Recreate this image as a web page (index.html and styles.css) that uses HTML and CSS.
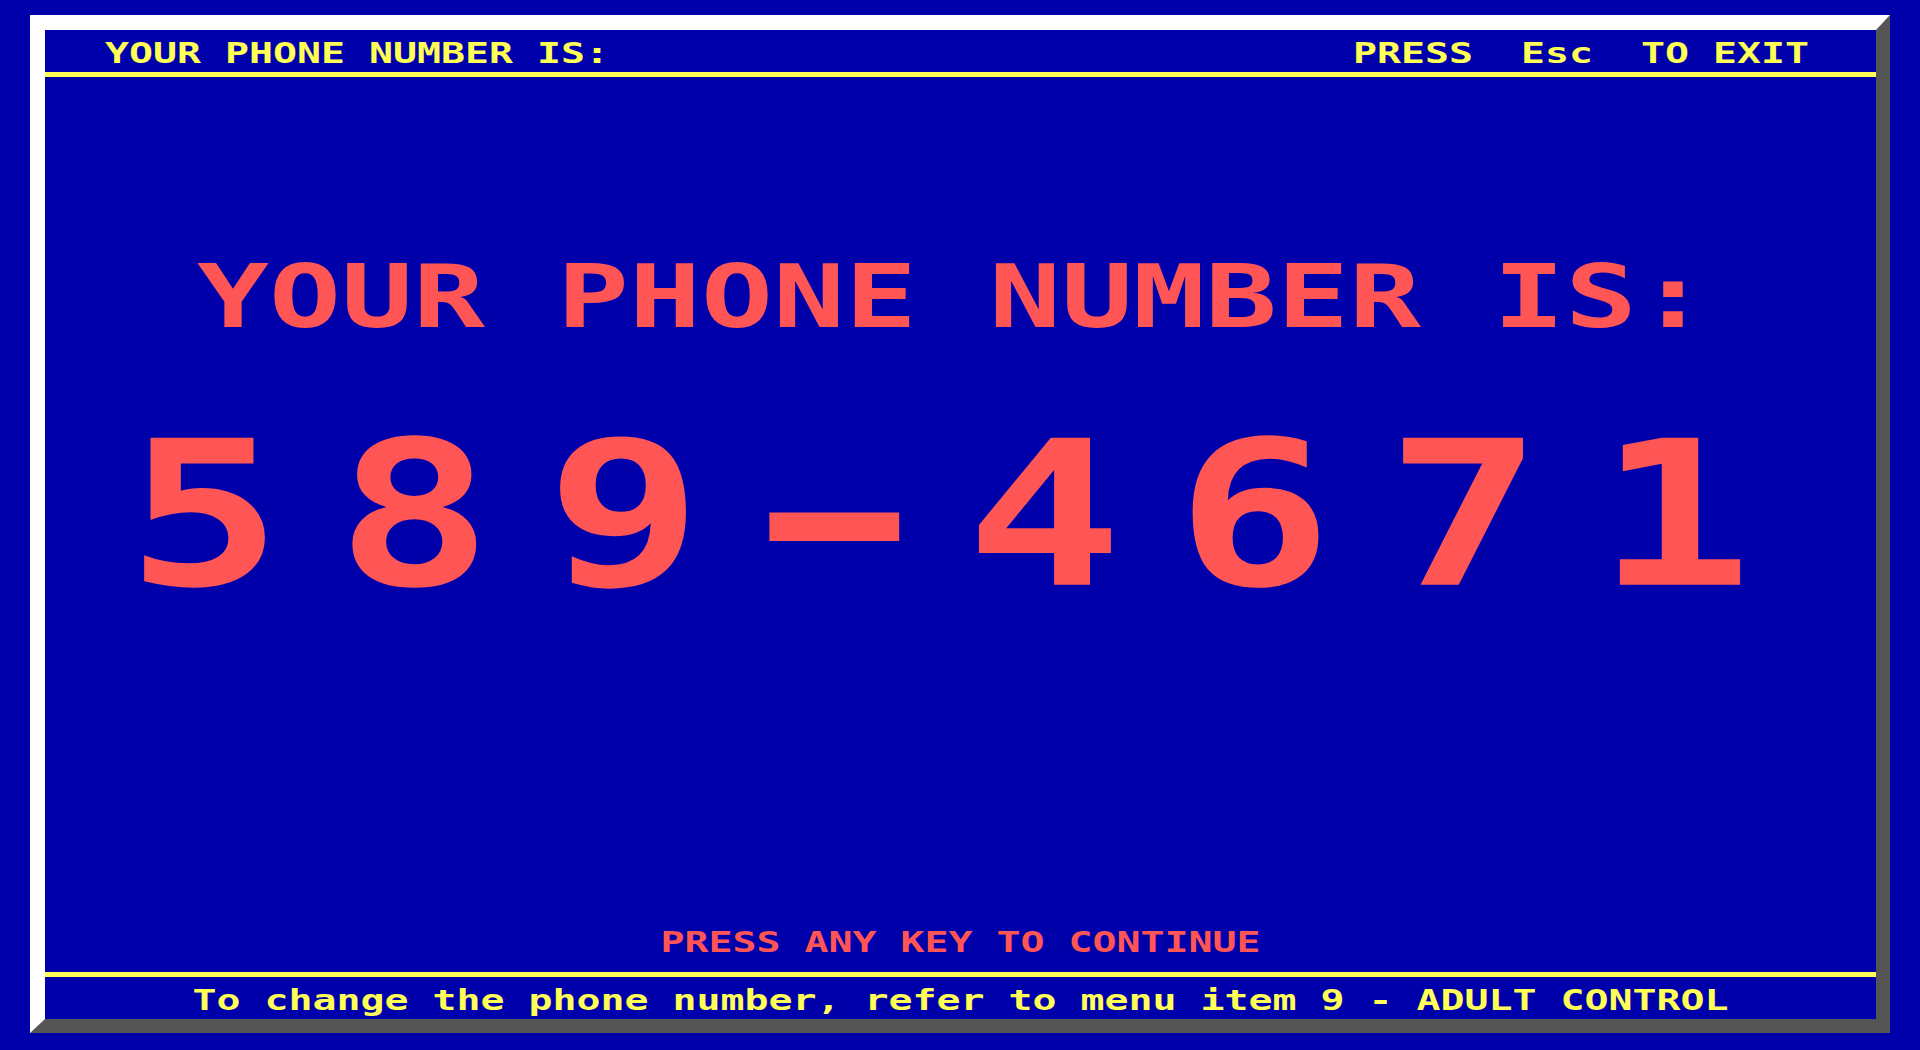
FILE: index.html
```html
<!DOCTYPE html>
<html lang="en">
<head>
<meta charset="utf-8">
<title>Your phone number</title>
<link rel="stylesheet" href="styles.css">
</head>
<body>
<div class="frame">
  <div class="screen">
    <header class="bar top">
      <span class="txt">YOUR PHONE NUMBER IS:</span>
      <span class="txt">PRESS  Esc  TO EXIT</span>
    </header>
    <div class="rule"></div>
    <main class="body">
      <div class="title"><span class="sq">YOUR PHONE NUMBER IS:</span></div>
      <div class="number"><span class="digits"><span class="d">5</span><span class="d">8</span><span class="d">9</span><span class="d dash">-</span><span class="d">4</span><span class="d">6</span><span class="d">7</span><span class="d">1</span></span></div>
      <div class="prompt"><span class="sq">PRESS ANY KEY TO CONTINUE</span></div>
    </main>
    <div class="rule"></div>
    <footer class="bar bottom">
      <span class="txt">To change the phone number, refer to menu item 9 - ADULT CONTROL</span>
    </footer>
  </div>
</div>
</body>
</html>
```

FILE: styles.css
```css
html, body {
  margin: 0;
  height: 100%;
}

body {
  background: #0000aa;
  overflow: hidden;
  padding: 15px 30px 0;
  box-sizing: border-box;
  font-family: "DejaVu Sans Mono", "Liberation Mono", monospace;
  font-weight: bold;
}

.frame {
  width: 1860px;
  height: 1018px;
  box-sizing: border-box;
  border-style: solid;
  border-width: 15px 14px 14px 15px;
  border-color: #ffffff #555555 #555555 #ffffff;
  background: #0000aa;
}

.screen {
  display: flex;
  flex-direction: column;
  height: 100%;
}

.bar {
  flex: none;
  height: 42px;
  box-sizing: border-box;
  padding-top: 3px;
  display: flex;
  align-items: center;
  color: #ffff55;
  font-size: 39.87px;
  line-height: 40px;
  white-space: pre;
}

.top {
  justify-content: space-between;
  padding-left: 60px;
  padding-right: 67px;
}

.bottom {
  justify-content: center;
}

.txt,
.sq {
  display: inline-block;
  transform: scaleY(0.7225);
}

.rule {
  flex: none;
  height: 5px;
  background: #ffff55;
}

.body {
  flex: 1;
  display: flex;
  flex-direction: column;
  color: #ff5555;
  padding-top: 170px;
  padding-bottom: 9px;
}

.title {
  height: 100px;
  line-height: 100px;
  font-size: 119.6px;
  padding-left: 152px;
  white-space: pre;
}

.number {
  height: 200px;
  line-height: 200px;
  font-size: 260px;
  margin-top: 68px;
  padding-left: 81px;
  white-space: nowrap;
}

.digits {
  display: inline-block;
  transform: scaleY(0.7757);
}

.d {
  display: inline-block;
  width: 210px;
}

.d.dash {
  width: 156.5px;
  margin-right: 53.5px;
  transform: scaleX(1.62);
  transform-origin: 78.26px 50%;
}

.prompt {
  margin-top: auto;
  height: 42px;
  line-height: 42px;
  font-size: 39.87px;
  text-align: center;
  white-space: pre;
}
```
